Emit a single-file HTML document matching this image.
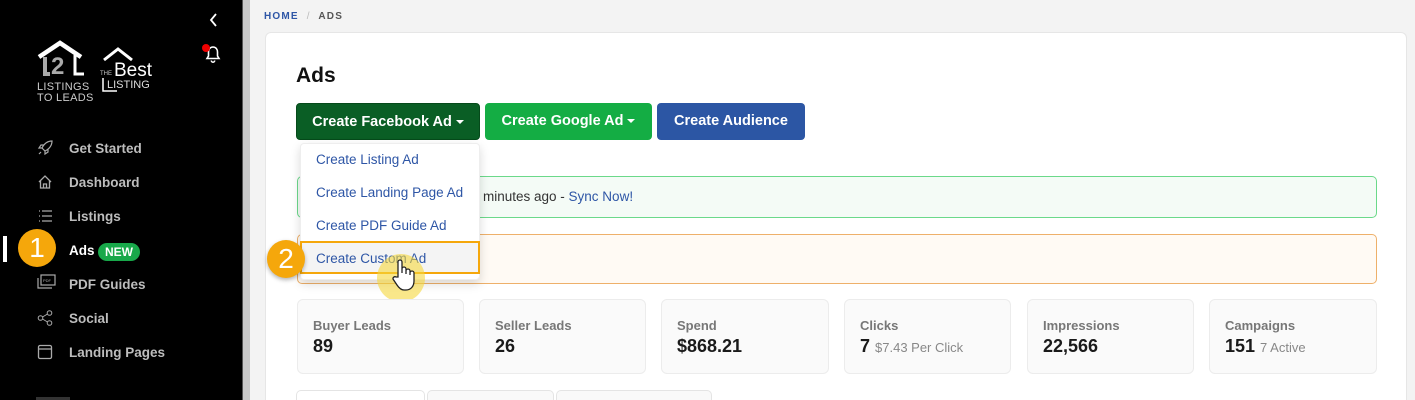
<!DOCTYPE html>
<html><head><meta charset="utf-8"><style>
*{box-sizing:border-box;margin:0;padding:0}
html{height:400px;overflow:hidden}
body{width:1415px;height:400px;overflow:hidden;background:#f3f3f3;font-family:"Liberation Sans",sans-serif;position:relative}
.abs{position:absolute}
#side{left:0;top:0;width:242px;height:400px;background:#000}
#strip{left:242px;top:0;width:8px;height:400px;background:#c9c9c9;border-left:1px solid #555}
.nav{position:absolute;left:69px;color:#bdbdbd;font-weight:bold;font-size:13.5px}
.ic{position:absolute;left:37px;width:16px;height:16px}
#card{left:265px;top:32px;width:1142px;height:368px;background:#fff;border:1px solid #e6e6e6;border-bottom:none;border-radius:6px 6px 0 0}
.btn{position:absolute;top:103px;height:37px;border-radius:4px;color:#fff;font-weight:bold;font-size:14.5px;line-height:37px;text-align:center}
.caret{display:inline-block;width:0;height:0;border-left:4px solid transparent;border-right:4px solid transparent;border-top:4px solid #fff;vertical-align:middle;margin-left:4px}
.dd{position:absolute;left:316px;color:#2e56a6;font-size:13.5px}
.stat{position:absolute;top:299px;height:75px;background:#fafafa;border:1px solid #ececec;border-radius:6px;padding:18px 0 0 15px}
.stat .l{color:#777;font-weight:bold;font-size:13px}
.stat .v{color:#1a1a1a;font-weight:bold;font-size:18px;margin-top:3px}
.stat .v span{color:#888;font-weight:normal;font-size:13px}
.badge{position:absolute;width:38px;height:38px;border-radius:50%;background:#f5a70b;color:#fff;font-size:28px;text-align:center;line-height:38px}
</style></head><body>
<div id="side" class="abs"></div>
<div id="strip" class="abs"></div>
<svg class="abs" style="left:208px;top:13px" width="12" height="14" viewBox="0 0 12 14"><path d="M8 1L3 7l5 6" stroke="#fff" stroke-width="1.8" fill="none"/></svg>
<svg class="abs" style="left:200px;top:42px" width="24" height="24" viewBox="0 0 24 24"><path d="M13 5c-3 0-4.5 2.5-4.5 5v4L7 16.5h12L17.5 14v-4C17.5 7.5 16 5 13 5z" stroke="#fff" stroke-width="1.6" fill="none"/><path d="M11.3 18.5a1.7 1.7 0 0 0 3.4 0" stroke="#fff" stroke-width="1.5" fill="none"/><circle cx="6" cy="6" r="4" fill="#e00"/></svg>
<svg class="abs" style="left:36px;top:40px" width="52" height="38" viewBox="0 0 52 38"><path d="M3 17L24 3 45 17" stroke="#fff" stroke-width="4.5" fill="none"/><path d="M9 17v17h5" stroke="#aaa" stroke-width="4" fill="none"/><text x="15" y="34" fill="#aaa" font-family="Liberation Sans" font-size="24" font-weight="bold">2</text><path d="M39 15v19h9" stroke="#fff" stroke-width="3" fill="none"/></svg>
<div class="abs" style="left:37px;top:82px;color:#ccc;font-size:11px;line-height:11px;letter-spacing:.3px">LISTINGS<br>TO LEADS</div>
<svg class="abs" style="left:99px;top:44px" width="56" height="48" viewBox="0 0 56 48"><path d="M5 16L19 5 33 16" stroke="#fff" stroke-width="3" fill="none"/><text x="1" y="31" fill="#ccc" font-family="Liberation Sans" font-size="6">THE</text><text x="15" y="32" fill="#fff" font-family="Liberation Sans" font-size="19">Best</text><path d="M4 34v13h14" stroke="#fff" stroke-width="1.5" fill="none"/><text x="8" y="44" fill="#ddd" font-family="Liberation Sans" font-size="11">LISTING</text></svg>
<svg class="ic" style="top:140px" viewBox="0 0 16 16"><path d="M15 1c-5 0-8 3-10 7l3 3c4-2 7-5 7-10zM5 8H2l2-3h3M8 11v3l3-2V9M4 12l-2 2" stroke="#aaa" stroke-width="1.2" fill="none"/></svg>
<div class="nav" style="top:141px">Get Started</div>
<svg class="ic" style="top:174px" viewBox="0 0 16 16"><path d="M2 8L8 2l6 6M3.5 7v7h9V7M6.5 14v-4h3v4" stroke="#aaa" stroke-width="1.3" fill="none"/></svg>
<div class="nav" style="top:175px">Dashboard</div>
<svg class="ic" style="top:208px" viewBox="0 0 16 16"><path d="M2 3h1M2 8h1M2 13h1M5 3h10M5 8h10M5 13h10" stroke="#aaa" stroke-width="1.3"/></svg>
<div class="nav" style="top:209px">Listings</div>
<div class="abs" style="left:3px;top:236px;width:4px;height:26px;background:#fff"></div>
<div class="badge" style="left:18px;top:229px">1</div>
<div class="nav" style="top:243px;color:#fff">Ads</div>
<div class="abs" style="left:98px;top:243px;width:42px;height:18px;border-radius:9px;background:#18a84a;color:#fff;font-weight:bold;font-size:12px;text-align:center;line-height:18px">NEW</div>
<svg class="ic" style="top:274px;width:19px" viewBox="0 0 19 16"><rect x="4" y="1" width="14" height="10" stroke="#aaa" fill="none" stroke-width="1.2"/><path d="M1 4v10h14" stroke="#aaa" fill="none" stroke-width="1.2"/><text x="6" y="8" font-size="4" fill="#aaa" font-family="Liberation Sans">PDF</text></svg>
<div class="nav" style="top:277px">PDF Guides</div>
<svg class="ic" style="top:310px" viewBox="0 0 16 16"><circle cx="3.5" cy="8" r="2.3" stroke="#aaa" fill="none"/><circle cx="12.5" cy="3" r="2.3" stroke="#aaa" fill="none"/><circle cx="12.5" cy="13" r="2.3" stroke="#aaa" fill="none"/><path d="M5.5 7l5-3M5.5 9l5 3" stroke="#aaa"/></svg>
<div class="nav" style="top:311px">Social</div>
<svg class="ic" style="top:344px" viewBox="0 0 16 16"><rect x="1.5" y="1.5" width="13" height="13" rx="1.5" stroke="#aaa" fill="none" stroke-width="1.3"/><path d="M1.5 5h13" stroke="#aaa" stroke-width="1.3"/></svg>
<div class="nav" style="top:345px">Landing Pages</div>
<div class="abs" style="left:36px;top:397px;width:34px;height:3px;background:#333"></div>

<div class="abs" style="left:264px;top:11px;font-size:10px;font-weight:bold;letter-spacing:1.2px;color:#2e56a6">HOME <span style="color:#bbb;font-weight:normal;margin:0 4px">/</span> <span style="color:#555">ADS</span></div>

<div id="card" class="abs"></div>
<div class="abs" style="left:296px;top:64px;font-size:21px;font-weight:bold;color:#111">Ads</div>
<div class="btn" style="left:296px;width:184px;background:#0a5e25;border:1px solid #064a1b">Create Facebook Ad<span class="caret"></span></div>
<div class="btn" style="left:485px;width:167px;background:#14ad44">Create Google Ad<span class="caret"></span></div>
<div class="btn" style="left:657px;width:148px;background:#2c56a4">Create Audience</div>

<div class="abs" style="left:297px;top:176px;width:1080px;height:42px;background:#f4fbf6;border:1px solid #6bd98a;border-radius:5px"></div>
<div class="abs" style="left:483px;top:189px;font-size:13.5px;color:#333">minutes ago - <span style="color:#2e56a6">Sync Now!</span></div>
<div class="abs" style="left:297px;top:234px;width:1080px;height:50px;background:#fffaf4;border:1px solid #eeb06a;border-radius:5px"></div>

<div class="abs" style="left:300px;top:143px;width:180px;height:137px;background:#fff;border:1px solid #eee;border-radius:4px;box-shadow:0 4px 10px rgba(0,0,0,.15)"></div>
<div class="dd" style="top:152px">Create Listing Ad</div>
<div class="dd" style="top:185px">Create Landing Page Ad</div>
<div class="dd" style="top:218px">Create PDF Guide Ad</div>
<div class="abs" style="left:300px;top:241px;width:180px;height:33px;background:#f4f4f4;border:2px solid #f5a70b"></div>
<div class="dd" style="top:251px">Create Custom Ad</div>
<div class="badge" style="left:267px;top:240px;box-shadow:0 2px 4px rgba(0,0,0,.3)">2</div>
<div class="abs" style="left:377px;top:254px;width:48px;height:48px;border-radius:50%;background:rgba(245,215,60,.6)"></div>
<svg class="abs" style="left:391px;top:258px" width="28" height="34" viewBox="0 0 28 34"><path d="M7 19V4a2 2 0 0 1 4 0v11V11a2 2 0 0 1 4 0v5-3a2 2 0 0 1 4 0v4-2a2 2 0 0 1 4 0v8c0 5-3 9-8 9h-2c-3 0-5-2-7-5l-4-6a2 2 0 0 1 3-2z" fill="#fff" stroke="#222" stroke-width="1.3"/></svg>

<div class="stat" style="left:297px;width:167px"><div class="l">Buyer Leads</div><div class="v">89</div></div>
<div class="stat" style="left:479px;width:167px"><div class="l">Seller Leads</div><div class="v">26</div></div>
<div class="stat" style="left:661px;width:168px"><div class="l">Spend</div><div class="v">$868.21</div></div>
<div class="stat" style="left:844px;width:167px"><div class="l">Clicks</div><div class="v">7 <span>$7.43 Per Click</span></div></div>
<div class="stat" style="left:1027px;width:167px"><div class="l">Impressions</div><div class="v">22,566</div></div>
<div class="stat" style="left:1209px;width:168px"><div class="l">Campaigns</div><div class="v">151 <span>7 Active</span></div></div>

<div class="abs" style="left:296px;top:390px;width:129px;height:10px;background:#fff;border:1px solid #e4e4e4;border-bottom:none;border-radius:5px 5px 0 0"></div>
<div class="abs" style="left:427px;top:390px;width:127px;height:10px;background:#f9f9f9;border:1px solid #e4e4e4;border-bottom:none;border-radius:5px 5px 0 0"></div>
<div class="abs" style="left:556px;top:390px;width:156px;height:10px;background:#f9f9f9;border:1px solid #e4e4e4;border-bottom:none;border-radius:5px 5px 0 0"></div>
</body></html>
